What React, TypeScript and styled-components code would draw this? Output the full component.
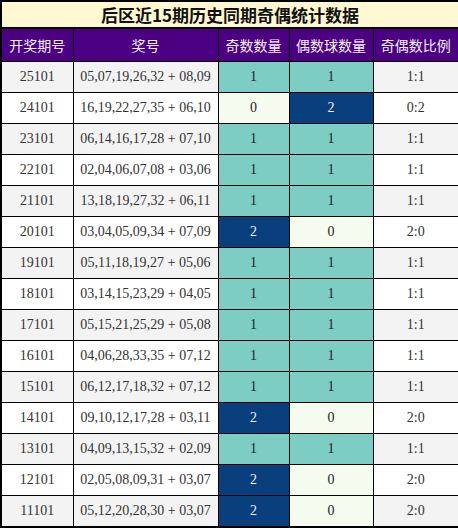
import styled, { createGlobalStyle } from 'styled-components';

type Row = {
  issue: string;
  numbers: string;
  odd: number;
  even: number;
};

const rows: Row[] = [
  { issue: '25101', numbers: '05,07,19,26,32 + 08,09', odd: 1, even: 1 },
  { issue: '24101', numbers: '16,19,22,27,35 + 06,10', odd: 0, even: 2 },
  { issue: '23101', numbers: '06,14,16,17,28 + 07,10', odd: 1, even: 1 },
  { issue: '22101', numbers: '02,04,06,07,08 + 03,06', odd: 1, even: 1 },
  { issue: '21101', numbers: '13,18,19,27,32 + 06,11', odd: 1, even: 1 },
  { issue: '20101', numbers: '03,04,05,09,34 + 07,09', odd: 2, even: 0 },
  { issue: '19101', numbers: '05,11,18,19,27 + 05,06', odd: 1, even: 1 },
  { issue: '18101', numbers: '03,14,15,23,29 + 04,05', odd: 1, even: 1 },
  { issue: '17101', numbers: '05,15,21,25,29 + 05,08', odd: 1, even: 1 },
  { issue: '16101', numbers: '04,06,28,33,35 + 07,12', odd: 1, even: 1 },
  { issue: '15101', numbers: '06,12,17,18,32 + 07,12', odd: 1, even: 1 },
  { issue: '14101', numbers: '09,10,12,17,28 + 03,11', odd: 2, even: 0 },
  { issue: '13101', numbers: '04,09,13,15,32 + 02,09', odd: 1, even: 1 },
  { issue: '12101', numbers: '02,05,08,09,31 + 03,07', odd: 2, even: 0 },
  { issue: '11101', numbers: '05,12,20,28,30 + 03,07', odd: 2, even: 0 },
];

const GlobalStyle = createGlobalStyle`
  html, body {
    margin: 0;
    padding: 0;
    background: #ffffff;
  }
`;

const Table = styled.table`
  width: 458px;
  border-collapse: collapse;
  table-layout: fixed;
  border: 2px solid #000;
  font-family: 'Liberation Serif', 'Noto Sans CJK SC', serif;
`;

const TitleCell = styled.th`
  height: 25px;
  padding: 0;
  background: #fff8d2;
  border: 2px solid #000;
  color: #111;
  font-family: 'Noto Sans CJK SC', sans-serif;
  font-size: 17px;
  font-weight: 700;
  text-align: center;
  line-height: 24px;
`;

const HeadCell = styled.th`
  height: 32px;
  padding: 0;
  background: #4b0082;
  border: 1px solid #000;
  border-top: 2px solid #000;
  color: #f2eef6;
  font-family: 'Noto Sans CJK SC', sans-serif;
  font-size: 14px;
  font-weight: 400;
  text-align: center;
`;

const Cell = styled.td<{ $striped: boolean }>`
  height: 30px;
  padding: 0;
  border: 1px solid #000;
  background: ${({ $striped }) => ($striped ? '#f3f3f3' : '#ffffff')};
  color: #333;
  font-size: 14px;
  text-align: center;
`;

const countColors: Record<number, { bg: string; fg: string }> = {
  0: { bg: '#f5fbef', fg: '#222' },
  1: { bg: '#7dcdc4', fg: '#222' },
  2: { bg: '#0a3f7e', fg: '#f0f0f0' },
};

const CountCell = styled.td<{ $count: number }>`
  height: 30px;
  padding: 0;
  border: 1px solid #000;
  background: ${({ $count }) => countColors[$count].bg};
  color: ${({ $count }) => countColors[$count].fg};
  font-size: 14px;
  text-align: center;
`;

export default function App() {
  return (
    <>
      <GlobalStyle />
      <Table>
        <colgroup>
          <col style={{ width: 72 }} />
          <col style={{ width: 145 }} />
          <col style={{ width: 71 }} />
          <col style={{ width: 84 }} />
          <col style={{ width: 86 }} />
        </colgroup>
        <thead>
          <tr>
            <TitleCell colSpan={5}>后区近15期历史同期奇偶统计数据</TitleCell>
          </tr>
          <tr>
            <HeadCell>开奖期号</HeadCell>
            <HeadCell>奖号</HeadCell>
            <HeadCell>奇数数量</HeadCell>
            <HeadCell>偶数球数量</HeadCell>
            <HeadCell>奇偶数比例</HeadCell>
          </tr>
        </thead>
        <tbody>
          {rows.map((r, i) => (
            <tr key={r.issue}>
              <Cell $striped={i % 2 === 0}>{r.issue}</Cell>
              <Cell $striped={i % 2 === 0}>{r.numbers}</Cell>
              <CountCell $count={r.odd}>{r.odd}</CountCell>
              <CountCell $count={r.even}>{r.even}</CountCell>
              <Cell $striped={i % 2 === 0}>
                {r.odd}:{r.even}
              </Cell>
            </tr>
          ))}
        </tbody>
      </Table>
    </>
  );
}
